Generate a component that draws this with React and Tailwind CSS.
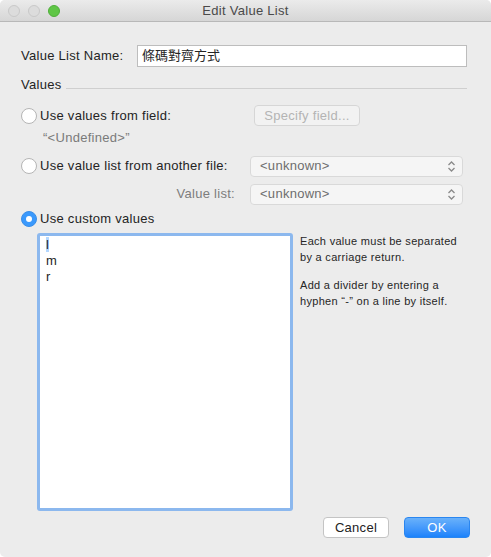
import React from 'react';

const font = { fontFamily: '"Liberation Sans", "Noto Sans CJK TC", sans-serif' };

function Radio({ checked }) {
    if (checked) {
        return (
            <span className="flex h-4 w-4 shrink-0 items-center justify-center rounded-full bg-[#3b99fc] border border-[#3a8ee8]">
                <span className="h-[6px] w-[6px] rounded-full bg-white" />
            </span>
        );
    }
    return <span className="h-4 w-4 shrink-0 rounded-full border border-[#b5b5b5] bg-white" />;
}

function Select({ label }) {
    return (
        <div className="flex h-[21px] w-[213px] items-center justify-between rounded-[4px] border border-[#d9d9d9] bg-[#f5f5f5] pl-[9px] pr-[6px] text-[13px] text-[#6e6e6e]">
            <span>{label}</span>
            <svg width="9" height="13" viewBox="0 0 9 13" fill="none" stroke="#8a8a8a" strokeWidth="1.3">
                <path d="M1.5 5 L4.5 2 L7.5 5" />
                <path d="M1.5 8 L4.5 11 L7.5 8" />
            </svg>
        </div>
    );
}

export default function App() {
    return (
        <div className="h-[557px] w-[491px] bg-white tracking-[0.28px]" style={font}>
            <div className="flex h-full w-full flex-col overflow-hidden rounded-[5px] bg-[#ececec]">
                {/* title bar */}
                <div className="relative flex h-[22px] shrink-0 items-center justify-center border-b border-[#b8b8b8] bg-gradient-to-b from-[#ebebeb] to-[#d6d6d6]">
                    <div className="absolute left-[8px] top-[5px] flex gap-[8px]">
                        <span className="h-3 w-3 rounded-full border border-[#c8c8c8] bg-[#dcdcdc]" />
                        <span className="h-3 w-3 rounded-full border border-[#c8c8c8] bg-[#dcdcdc]" />
                        <span className="h-3 w-3 rounded-full border border-[#4fae3a] bg-[#5fc646]" />
                    </div>
                    <span className="text-[13px] text-[#4a4a4a]">Edit Value List</span>
                </div>

                <div className="flex flex-1 flex-col px-[21px] text-[13px] text-[#242424]">
                    <div className="mt-[23px] flex items-center">
                        <span className="w-[116px]">Value List Name:</span>
                        <div className="flex h-[22px] flex-1 items-center border border-[#bdbdbd] bg-white pl-[4px] mr-[3px] tracking-normal">
                            條碼對齊方式
                        </div>
                    </div>

                    <div className="mt-[10px] flex h-4 items-center">
                        <span>Values</span>
                        <div className="ml-[5px] mr-[3px] mt-[7px] h-px flex-1 bg-[#cfcfcf]" />
                    </div>

                    <div className="mt-[12px] flex h-[21px] items-center">
                        <Radio />
                        <span className="ml-[3px] w-[214px]">Use values from field:</span>
                        <div className="flex h-[21px] w-[106px] items-center justify-center rounded-[4px] border border-[#d6d6d6] bg-[#f2f2f2] text-[#b4b4b4]">
                            Specify field...
                        </div>
                    </div>
                    <div className="mt-[2px] pl-[22px] text-[#7a7a7a]">“&lt;Undefined&gt;”</div>

                    <div className="mt-[8px] flex h-[21px] items-center">
                        <Radio />
                        <span className="ml-[3px] w-[210px]">Use value list from another file:</span>
                        <Select label="<unknown>" />
                    </div>
                    <div className="mt-[7px] flex h-[21px] items-center">
                        <span className="w-[216px] pr-[2px] text-right text-[#7d7d7d]">Value list:</span>
                        <div className="ml-[13px]">
                            <Select label="<unknown>" />
                        </div>
                    </div>

                    <div className="mt-[6px] flex h-4 items-center">
                        <Radio checked />
                        <span className="ml-[3px]">Use custom values</span>
                    </div>

                    <div className="mt-[6px] flex">
                        <div className="ml-[16px] h-[278px] w-[256px] rounded-[3px] border-[3px] border-[#8cb8ee] bg-white px-[6px] pt-[1px] leading-[16px]">
                            <div><span className="bg-[#b3d7ff]">l</span></div>
                            <div>m</div>
                            <div>r</div>
                        </div>
                        <div className="ml-[7px] text-[11px] leading-[16px] tracking-[0.3px] text-[#262626]">
                            <p>Each value must be separated<br />by a carriage return.</p>
                            <p className="mt-[12px]">Add a divider by entering a<br />hyphen “-” on a line by itself.</p>
                        </div>
                    </div>

                    <div className="mt-[6px] flex justify-end gap-[15px]">
                        <button className="h-[21px] w-[66px] rounded-[4px] border border-[#c4c4c4] bg-white text-[13px] text-[#222]">
                            Cancel
                        </button>
                        <button className="h-[21px] w-[66px] rounded-[4px] border border-[#2a86f0] bg-gradient-to-b from-[#69b1fa] to-[#1a82fb] text-[13px] text-white">
                            OK
                        </button>
                    </div>
                </div>
            </div>
        </div>
    );
}
